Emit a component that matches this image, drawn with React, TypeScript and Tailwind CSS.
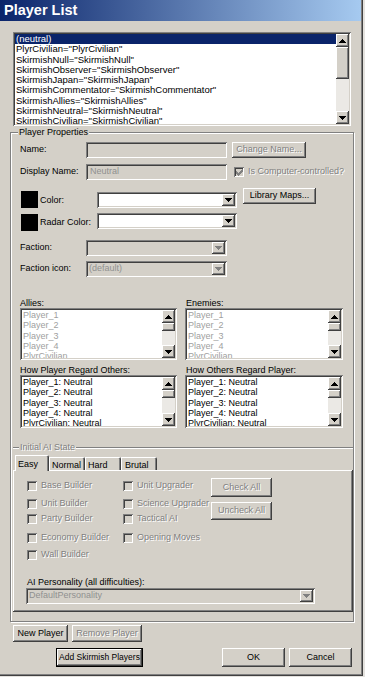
import type { ReactNode } from 'react'

const raised =
  'shadow-[inset_-1px_-1px_0_#404040,inset_1px_1px_0_#ffffff,inset_-2px_-2px_0_#808080,inset_2px_2px_0_#d4d0c8]'
const sunken =
  'shadow-[inset_1px_1px_0_#808080,inset_-1px_-1px_0_#ffffff,inset_2px_2px_0_#404040,inset_-2px_-2px_0_#d4d0c8]'
const etched = 'border border-[#808080] shadow-[inset_1px_1px_0_#ffffff,1px_1px_0_#ffffff]'
const grayText = 'text-[#808080] [text-shadow:1px_1px_0_#ffffff]'
const tabShadow = 'shadow-[inset_1px_1px_0_#ffffff,inset_-1px_0_0_#404040,inset_-2px_0_0_#808080]'

function Arrow({ up, gray }: { up?: boolean; gray?: boolean }) {
  return (
    <svg width="7" height="4" viewBox="0 0 7 4" shapeRendering="crispEdges">
      <path d={up ? 'M3 0h1v1h1v1h1v1h1v1H0V3h1V2h1V1h1z' : 'M0 0h7v1H6v1H5v1H4v1H3V3H2V2H1V1H0z'} fill={gray ? '#808080' : '#000'} />
    </svg>
  )
}

function Btn({ className, children, disabled, isDefault }: { className: string; children: ReactNode; disabled?: boolean; isDefault?: boolean }) {
  const inner = (
    <div className={`flex items-center justify-center w-full h-full whitespace-nowrap bg-[#d4d0c8] ${raised} ${disabled ? grayText : ''}`}>
      {children}
    </div>
  )
  if (isDefault) return <div className={`border border-black shrink-0 ${className}`}>{inner}</div>
  return <div className={`shrink-0 ${className}`}>{inner}</div>
}

function Check({ checked }: { checked?: boolean }) {
  return (
    <div className={`w-[10px] h-[10px] shrink-0 bg-[#d4d0c8] ${sunken} flex items-center justify-center`}>
      {checked && (
        <svg width="7" height="7" viewBox="0 0 7 7" shapeRendering="crispEdges">
          <path d="M6 0h1v3H6v1H5v1H4v1H3v1H2V6H1V5H0V2h1v1h1v1h1V3h1V2h1V1h1z" fill="#808080" />
        </svg>
      )}
    </div>
  )
}

function Combo({ className, text, disabled }: { className: string; text?: string; disabled?: boolean }) {
  return (
    <div className={`flex shrink-0 p-[2px] ${sunken} ${disabled ? 'bg-[#d4d0c8]' : 'bg-white'} ${className}`}>
      <div className="flex-1 flex items-center pl-[1px] text-[#909090] overflow-hidden whitespace-nowrap">{text}</div>
      <div className={`w-[13px] h-full bg-[#d4d0c8] flex items-center justify-center ${raised}`}>
        <Arrow gray={disabled} />
      </div>
    </div>
  )
}

function ScrollBar({ thumbH }: { thumbH: string }) {
  return (
    <div className="w-[13px] h-full flex flex-col shrink-0">
      <div className={`h-[13px] shrink-0 bg-[#d4d0c8] flex items-center justify-center ${raised}`}>
        <Arrow up />
      </div>
      <div className="flex-1 bg-[#ebe9e5]">
        <div className={`bg-[#d4d0c8] ${raised} ${thumbH}`} />
      </div>
      <div className={`h-[13px] shrink-0 bg-[#d4d0c8] flex items-center justify-center ${raised}`}>
        <Arrow />
      </div>
    </div>
  )
}

function ListBox({
  className,
  items,
  gray,
  selected,
  thumbH,
}: {
  className: string
  items: string[]
  gray?: boolean
  selected?: number
  thumbH: string
}) {
  return (
    <div className={`flex shrink-0 p-[2px] bg-white ${sunken} ${className}`}>
      <div className="flex-1 overflow-hidden">
        {items.map((t, i) => (
          <div
            key={t}
            className={`h-[10.3px] leading-[10.3px] pl-[1px] whitespace-nowrap ${
              i === selected ? 'bg-[#0a246a] text-white' : gray ? 'text-[#a0a0a0]' : 'text-black'
            }`}
          >
            {t}
          </div>
        ))}
      </div>
      <ScrollBar thumbH={thumbH} />
    </div>
  )
}

const players = [
  '(neutral)',
  'PlyrCivilian="PlyrCivilian"',
  'SkirmishNull="SkirmishNull"',
  'SkirmishObserver="SkirmishObserver"',
  'SkirmishJapan="SkirmishJapan"',
  'SkirmishCommentator="SkirmishCommentator"',
  'SkirmishAllies="SkirmishAllies"',
  'SkirmishNeutral="SkirmishNeutral"',
  'SkirmishCivilian="SkirmishCivilian"',
]
const others = ['Player_1', 'Player_2', 'Player_3', 'Player_4', 'PlyrCivilian']
const regard = others.map((p) => `${p}: Neutral`)

function CheckRow({ label, className }: { label: string; className: string }) {
  return (
    <div className={`flex items-center h-[10px] ${className}`}>
      <Check />
      <span className={`ml-[4px] whitespace-nowrap ${grayText}`}>{label}</span>
    </div>
  )
}

export default function App() {
  return (
    <div className="w-[365px] h-[677px] bg-[#e4e2de] text-[9px] text-black font-['Liberation_Sans',Arial,sans-serif] overflow-hidden">
      <div className="w-[363px] h-[676px] flex flex-col bg-[#d4d0c8] shadow-[inset_-1px_-1px_0_#404040,inset_-2px_-2px_0_#808080]">
        <div className="h-[21px] shrink-0 flex items-center pl-[4px] mr-[2px] bg-[linear-gradient(90deg,#0a246a,#a6caf0)] text-white font-bold text-[14.5px]">
          Player List
        </div>

        <ListBox
          className="ml-[13px] mt-[11px] w-[338px] h-[94px] text-[9.5px]"
          items={players}
          selected={0}
          thumbH="h-[32px]"
        />

        <div className={`relative ml-[10px] mt-[6px] w-[344px] h-[490px] shrink-0 ${etched}`}>
          <span className="absolute -top-[6px] left-[7px] px-[1px] bg-[#d4d0c8] leading-[10px]">Player Properties</span>

          <div className="mt-[9px] h-[16px] flex items-center">
            <span className="ml-[9px] w-[66px]">Name:</span>
            <div className={`w-[141px] h-[16px] bg-[#d4d0c8] ${sunken}`} />
            <Btn className="ml-[5px] w-[74px] h-[16px]" disabled>
              Change Name...
            </Btn>
          </div>

          <div className="mt-[6px] h-[16px] flex items-center">
            <span className="ml-[9px] w-[66px]">Display Name:</span>
            <div className={`w-[141px] h-[16px] bg-[#d4d0c8] flex items-center pl-[4px] text-[#909090] ${sunken}`}>Neutral</div>
            <div className="ml-[7px]">
              <Check checked />
            </div>
            <span className={`ml-[4px] whitespace-nowrap ${grayText}`}>Is Computer-controlled?</span>
          </div>

          <div className="mt-[8px] h-[21px] flex items-start">
            <div className="ml-[10px] mt-[3px] w-[17px] h-[17px] bg-black shrink-0" />
            <span className="ml-[2px] mt-[7px] w-[57px] leading-[10px]">Color:</span>
            <Combo className="mt-[4px] w-[140px] h-[16px]" />
            <Btn className="ml-[6px] w-[73px] h-[16px]">Library Maps...</Btn>
          </div>

          <div className="mt-[4px] h-[19px] flex items-start">
            <div className="ml-[10px] mt-[1px] w-[17px] h-[17px] bg-black shrink-0" />
            <span className="ml-[2px] mt-[4px] w-[57px] leading-[10px]">Radar Color:</span>
            <Combo className="w-[140px] h-[16px]" />
          </div>

          <div className="mt-[8px] h-[16px] flex items-center">
            <span className="ml-[9px] w-[66px]">Faction:</span>
            <Combo className="w-[141px] h-[16px]" disabled />
          </div>

          <div className="mt-[5px] h-[16px] flex items-center">
            <span className="ml-[9px] w-[66px]">Faction icon:</span>
            <Combo className="w-[141px] h-[16px]" disabled text="(default)" />
          </div>

          <div className="mt-[21px] h-[10px] flex items-center leading-[10px]">
            <span className="ml-[9px] w-[166px]">Allies:</span>
            <span>Enemies:</span>
          </div>
          <div className="flex">
            <ListBox className="ml-[9px] w-[157px] h-[52px]" items={others} gray thumbH="h-[8px]" />
            <ListBox className="ml-[8px] w-[158px] h-[52px]" items={others} gray thumbH="h-[8px]" />
          </div>

          <div className="mt-[5px] h-[10px] flex items-center leading-[10px]">
            <span className="ml-[9px] w-[166px]">How Player Regard Others:</span>
            <span>How Others Regard Player:</span>
          </div>
          <div className="flex">
            <ListBox className="ml-[9px] w-[157px] h-[53px]" items={regard} thumbH="h-[8px]" />
            <ListBox className="ml-[8px] w-[158px] h-[53px]" items={regard} thumbH="h-[8px]" />
          </div>

          <div className="relative mt-[19px] ml-[2px] w-[340px] border-t border-[#808080] shadow-[inset_0_1px_0_#ffffff]">
            <span className={`absolute -top-[6px] left-[6px] px-[1px] bg-[#d4d0c8] leading-[10px] ${grayText}`}>Initial AI State</span>

            <div className="mt-[7px] ml-[2px] h-[15px] flex items-end">
              <div className={`relative z-10 -mb-[1px] w-[34px] h-[16px] bg-[#d4d0c8] pl-[3px] pt-[3px] rounded-tr-[2px] ${tabShadow}`}>
                Easy
              </div>
              <div className={`w-[36px] h-[13px] bg-[#d4d0c8] pl-[3px] pt-[2px] rounded-tr-[2px] ${tabShadow}`}>Normal</div>
              <div className={`w-[36px] h-[13px] bg-[#d4d0c8] pl-[3px] pt-[2px] rounded-tr-[2px] ${tabShadow}`}>Hard</div>
              <div className={`w-[36px] h-[13px] bg-[#d4d0c8] pl-[4px] pt-[2px] rounded-tr-[2px] ${tabShadow}`}>Brutal</div>
            </div>

            <div className={`h-[142px] w-[340px] ${raised}`}>
              <div className="flex">
                <div className="ml-[14px] w-[96px] flex flex-col">
                  <CheckRow className="mt-[11px]" label="Base Builder" />
                  <CheckRow className="mt-[8px]" label="Unit Builder" />
                  <CheckRow className="mt-[5px]" label="Party Builder" />
                  <CheckRow className="mt-[9px]" label="Economy Builder" />
                  <CheckRow className="mt-[7px]" label="Wall Builder" />
                </div>
                <div className="w-[88px] flex flex-col">
                  <CheckRow className="mt-[11px]" label="Unit Upgrader" />
                  <CheckRow className="mt-[8px]" label="Science Upgrader" />
                  <CheckRow className="mt-[5px]" label="Tactical AI" />
                  <CheckRow className="mt-[9px]" label="Opening Moves" />
                </div>
                <div className="flex flex-col">
                  <Btn className="mt-[8px] w-[61px] h-[19px]" disabled>
                    Check All
                  </Btn>
                  <Btn className="mt-[5px] w-[61px] h-[18px]" disabled>
                    Uncheck All
                  </Btn>
                </div>
              </div>
              <div className="mt-[17px] ml-[14px] h-[10px] leading-[10px]">AI Personality (all difficulties):</div>
              <Combo className="mt-[1px] ml-[13px] w-[289px] h-[16px]" disabled text="DefaultPersonality" />
            </div>
          </div>
        </div>

        <div className="mt-[3px] h-[17px] flex">
          <Btn className="ml-[13px] w-[55px] h-[17px]">New Player</Btn>
          <Btn className="ml-[4px] w-[70px] h-[17px]" disabled>
            Remove Player
          </Btn>
        </div>
        <div className="mt-[6px] h-[19px] flex">
          <Btn className="ml-[56px] w-[87px] h-[19px] text-[8.5px]" isDefault>
            Add Skirmish Players
          </Btn>
          <Btn className="ml-[79px] w-[63px] h-[19px]">OK</Btn>
          <Btn className="ml-[4px] w-[63px] h-[19px]">Cancel</Btn>
        </div>
      </div>
    </div>
  )
}
